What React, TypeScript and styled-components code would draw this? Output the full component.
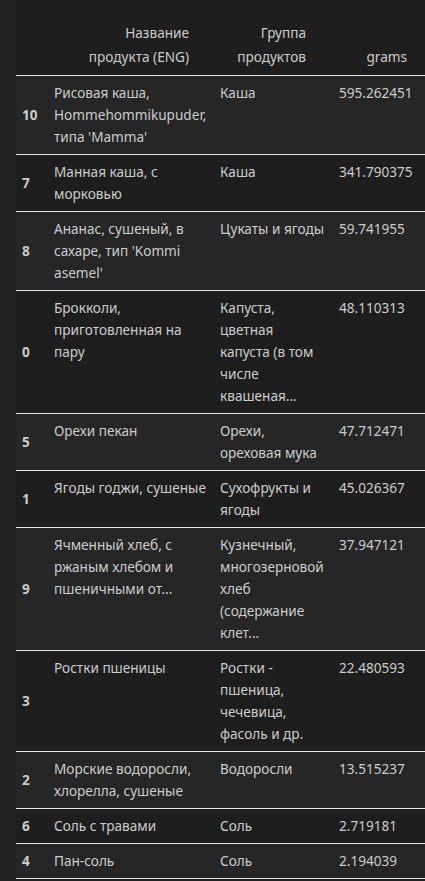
import * as React from 'react';
import styled, { createGlobalStyle } from 'styled-components';

interface Row {
    idx: string;
    name: string;
    group: string;
    grams: string;
}

// line breaks follow the wrapping of the notebook output
const rows: Row[] = [
    { idx: '10', name: "Рисовая каша,\nHommehommikupuder,\nтипа 'Mamma'", group: 'Каша', grams: '595.262451' },
    { idx: '7', name: 'Манная каша, с\nморковью', group: 'Каша', grams: '341.790375' },
    { idx: '8', name: "Ананас, сушеный, в\nсахаре, тип 'Kommi\nasemel'", group: 'Цукаты и ягоды', grams: '59.741955' },
    { idx: '0', name: 'Брокколи,\nприготовленная на\nпару', group: 'Капуста,\nцветная\nкапуста (в том\nчисле\nквашеная...', grams: '48.110313' },
    { idx: '5', name: 'Орехи пекан', group: 'Орехи,\nореховая мука', grams: '47.712471' },
    { idx: '1', name: 'Ягоды годжи, сушеные', group: 'Сухофрукты и\nягоды', grams: '45.026367' },
    { idx: '9', name: 'Ячменный хлеб, с\nржаным хлебом и\nпшеничными от...', group: 'Кузнечный,\nмногозерновой\nхлеб\n(содержание\nклет...', grams: '37.947121' },
    { idx: '3', name: 'Ростки пшеницы', group: 'Ростки -\nпшеница,\nчечевица,\nфасоль и др.', grams: '22.480593' },
    { idx: '2', name: 'Морские водоросли,\nхлорелла, сушеные', group: 'Водоросли', grams: '13.515237' },
    { idx: '6', name: 'Соль с травами', group: 'Соль', grams: '2.719181' },
    { idx: '4', name: 'Пан-соль', group: 'Соль', grams: '2.194039' },
];

const GlobalStyle = createGlobalStyle`
    html, body {
        margin: 0;
        padding: 0;
        background: #222222;
        overflow: hidden;
    }
`;

const Page = styled.div`
    display: flex;
    padding-left: 16px;
    background: #222222;
    min-height: 881px;
    font-family: 'Noto Sans', 'Open Sans', sans-serif;
    font-size: 13.6px;
    color: #cccccc;
`;

const Table = styled.table`
    border-collapse: collapse;
    table-layout: fixed;
    width: 409px;
    flex-shrink: 0;
    background: #1e1e1e;
    align-self: flex-start;
`;

const HeadCell = styled.th<{ $pr: number }>`
    font-weight: normal;
    text-align: right;
    vertical-align: bottom;
    line-height: 24px;
    white-space: pre-line;
    padding: 21px ${(p) => p.$pr}px 6px 4px;
    border-bottom: 1px solid #e6e6e6;
`;

const BodyRow = styled.tr`
    &:nth-child(odd) {
        background: #262626;
    }
    border-bottom: 1px solid #e6e6e6;
`;

const IndexCell = styled.th`
    text-align: left;
    vertical-align: middle;
    font-weight: bold;
    line-height: 22px;
    padding: 6px 4px 6px 6px;
`;

const Cell = styled.td`
    text-align: left;
    vertical-align: top;
    line-height: 22px;
    padding: 6px 4px;
    white-space: pre-line;
`;

const App: React.FC = () => {
    return (
        <>
            <GlobalStyle />
            <Page>
                <Table>
                    <colgroup>
                        <col style={{ width: 34 }} />
                        <col style={{ width: 166 }} />
                        <col style={{ width: 119 }} />
                        <col style={{ width: 90 }} />
                    </colgroup>
                    <thead>
                        <tr>
                            <HeadCell $pr={0} />
                            <HeadCell $pr={27}>{'Название\nпродукта (ENG)'}</HeadCell>
                            <HeadCell $pr={29}>{'Группа\nпродуктов'}</HeadCell>
                            <HeadCell $pr={18}>grams</HeadCell>
                        </tr>
                    </thead>
                    <tbody>
                        {rows.map((r) => (
                            <BodyRow key={r.idx}>
                                <IndexCell>{r.idx}</IndexCell>
                                <Cell>{r.name}</Cell>
                                <Cell>{r.group}</Cell>
                                <Cell>{r.grams}</Cell>
                            </BodyRow>
                        ))}
                    </tbody>
                </Table>
            </Page>
        </>
    );
};

export default App;
